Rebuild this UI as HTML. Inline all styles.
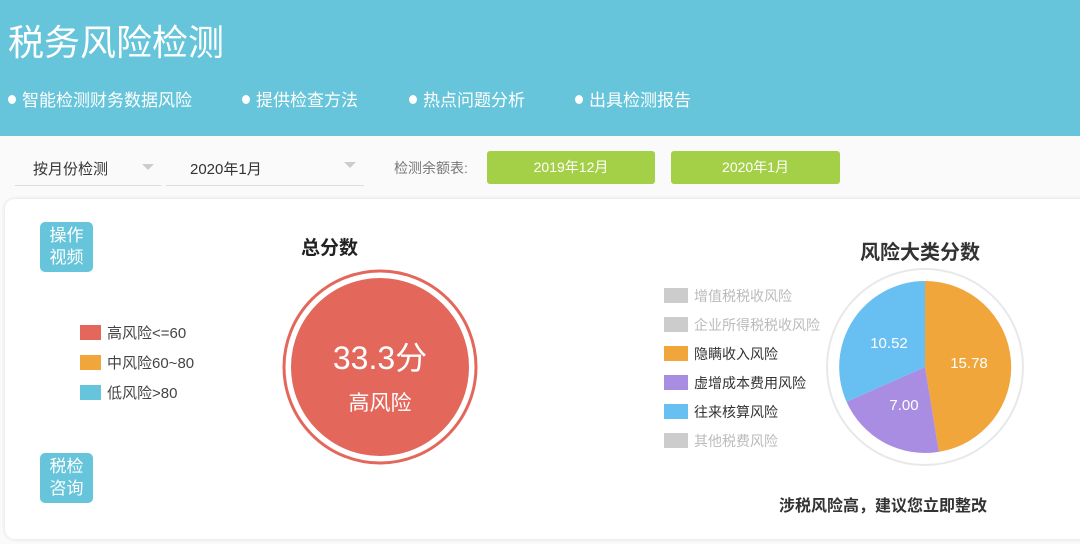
<!DOCTYPE html>
<html><head><meta charset="utf-8"><style>
*{margin:0;padding:0;box-sizing:border-box}
body{width:1080px;height:544px;overflow:hidden;background:#fafafa;font-family:"Liberation Sans","Noto Sans CJK SC",sans-serif;position:relative}
.a{position:absolute;white-space:nowrap}
.hdr{position:absolute;left:0;top:0;width:1080px;height:136px;background:#66c5da}
.bul{color:#fff;font-size:17px}
.bul:before{content:"";display:inline-block;width:8px;height:9px;border-radius:50%;background:#fff;margin-right:6px;vertical-align:2px}
.sel{border-bottom:1px solid #ddd;height:50px}
.tri{position:absolute;width:0;height:0;border-left:6px solid transparent;border-right:6px solid transparent;border-top:6px solid #ccc}
.gb{position:absolute;background:#a3d046;border-radius:3px;color:#fff;font-size:14px;text-align:center;line-height:33px}
.card{position:absolute;left:5px;top:199px;width:1090px;height:340px;background:#fff;border-radius:10px;box-shadow:0 0 4px rgba(0,0,0,.12)}
.tb{position:absolute;background:#66c5da;color:#fff;border-radius:5px;font-size:17px;line-height:22px;text-align:center;padding-top:3px}
.sq{display:inline-block;width:21px;height:15px;margin-right:6px;vertical-align:-2px}
.lg{font-size:15px;color:#444}
.rl{font-size:14px}
</style></head><body>
<div class="hdr"></div>
<div class="a" style="left:8px;top:14px;color:#fff;font-size:36px">税务风险检测</div>
<div class="a bul" style="left:8px;top:86px">智能检测财务数据风险</div>
<div class="a bul" style="left:242px;top:86px">提供检查方法</div>
<div class="a bul" style="left:409px;top:86px">热点问题分析</div>
<div class="a bul" style="left:575px;top:86px">出具检测报告</div>

<div class="a sel" style="left:15px;top:136px;width:146px"></div>
<div class="a" style="left:33px;top:158px;font-size:15px;color:#333">按月份检测</div>
<div class="tri" style="left:142px;top:164px"></div>
<div class="a sel" style="left:166px;top:136px;width:198px"></div>
<div class="a" style="left:190px;top:158px;font-size:15px;color:#333">2020年1月</div>
<div class="tri" style="left:344px;top:162px"></div>
<div class="a" style="left:394px;top:158px;font-size:14px;color:#777">检测余额表:</div>
<div class="gb" style="left:487px;top:151px;width:168px">2019年12月</div>
<div class="gb" style="left:671px;top:151px;width:169px">2020年1月</div>

<div class="card"></div>
<div class="tb" style="left:40px;top:222px;width:53px;height:50px">操作<br>视频</div>
<div class="tb" style="left:40px;top:453px;width:53px;height:50px">税检<br>咨询</div>
<div class="a" style="left:301px;top:233px;font-size:19px;font-weight:bold;color:#222">总分数</div>
<div class="a lg" style="left:80px;top:322px"><span class="sq" style="background:#e4675b"></span>高风险&lt;=60</div>
<div class="a lg" style="left:80px;top:352px"><span class="sq" style="background:#f0a63a"></span>中风险60~80</div>
<div class="a lg" style="left:80px;top:382px"><span class="sq" style="background:#66c5da"></span>低风险&gt;80</div>

<svg class="a" style="left:0;top:0" width="1080" height="544">
<circle cx="380" cy="367" r="96" fill="none" stroke="#e4675b" stroke-width="3"/>
<circle cx="380" cy="367" r="89" fill="#e4675b"/>
<text x="380" y="369" text-anchor="middle" fill="#fff" font-size="32" font-family="Liberation Sans,Noto Sans CJK SC,sans-serif">33.3分</text>
<text x="380" y="410" text-anchor="middle" fill="#fff" font-size="21" font-family="Liberation Sans,Noto Sans CJK SC,sans-serif">高风险</text>
<circle cx="925" cy="367" r="98" fill="none" stroke="#e8e8e8" stroke-width="2"/>
<path d="M925 367 L925 281 A86 86 0 0 1 938.9 451.9 Z" fill="#f0a63a"/>
<path d="M925 367 L938.9 451.9 A86 86 0 0 1 846.5 401.7 Z" fill="#a98de3"/>
<path d="M925 367 L846.5 401.7 A86 86 0 0 1 925 281 Z" fill="#68bff2"/>
<g fill="#fff" font-size="15" font-family="Liberation Sans,sans-serif" text-anchor="middle">
<text x="889" y="348">10.52</text><text x="969" y="368">15.78</text><text x="904" y="410">7.00</text></g>
</svg>
<div class="a" style="left:860px;top:236px;font-size:20px;font-weight:bold;color:#333">风险大类分数</div>
<div class="a rl" style="left:664px;top:286px;color:#bbb"><span class="sq" style="background:#ccc;width:24px"></span>增值税税收风险</div>
<div class="a rl" style="left:664px;top:315px;color:#bbb"><span class="sq" style="background:#ccc;width:24px"></span>企业所得税税收风险</div>
<div class="a rl" style="left:664px;top:344px;color:#333"><span class="sq" style="background:#f0a63a;width:24px"></span>隐瞒收入风险</div>
<div class="a rl" style="left:664px;top:373px;color:#333"><span class="sq" style="background:#a98de3;width:24px"></span>虚增成本费用风险</div>
<div class="a rl" style="left:664px;top:402px;color:#333"><span class="sq" style="background:#68bff2;width:24px"></span>往来核算风险</div>
<div class="a rl" style="left:664px;top:431px;color:#bbb"><span class="sq" style="background:#ccc;width:24px"></span>其他税费风险</div>
<div class="a" style="left:779px;top:492px;font-size:16px;font-weight:bold;color:#333">涉税风险高，建议您立即整改</div>
</body></html>
